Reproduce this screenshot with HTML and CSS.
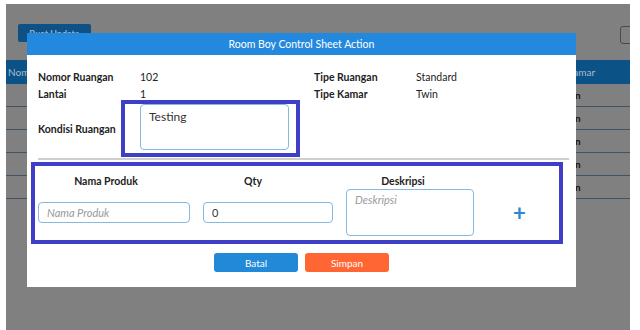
FILE: index.html
```
<!DOCTYPE html>
<html lang="id">
<head>
  <meta charset="UTF-8"/>
  <meta name="viewport" content="width=device-width, initial-scale=1.0"/>
  <title>Room Boy Control Sheet</title>
  <link rel="stylesheet" href="styles.css">
</head>
<body>
  <div class="screen">
    <!-- halaman di belakang modal (sudah diredupkan) -->
    <div class="toolbar">
      <button class="btn-update">Buat Update</button>
      <button class="btn-outline" aria-label="Cari"></button>
    </div>
    <table class="list">
      <thead>
        <tr><th class="c-no">Nomor Ruangan</th><th class="c-mid">Lantai</th><th class="c-kamar">Tipe Kamar</th><th class="c-end"></th></tr>
      </thead>
      <tbody>
        <tr><td class="c-no"></td><td class="c-mid">1</td><td class="c-kamar">Twin</td><td class="c-end"></td></tr>
        <tr><td class="c-no"></td><td class="c-mid">1</td><td class="c-kamar">Twin</td><td class="c-end"></td></tr>
        <tr><td class="c-no"></td><td class="c-mid">1</td><td class="c-kamar">Twin</td><td class="c-end"></td></tr>
        <tr><td class="c-no"></td><td class="c-mid">2</td><td class="c-kamar">Twin</td><td class="c-end"></td></tr>
        <tr><td class="c-no"></td><td class="c-mid">2</td><td class="c-kamar">Twin</td><td class="c-end"></td></tr>
      </tbody>
    </table>

    <!-- MODAL -->
    <div class="modal">
      <div class="modal-header">Room Boy Control Sheet Action</div>
      <div class="modal-body">
        <div class="info">
          <div class="lbl">Nomor Ruangan</div><div class="val">102</div>
          <div class="lbl">Tipe Ruangan</div><div class="val">Standard</div>
          <div class="lbl">Lantai</div><div class="val">1</div>
          <div class="lbl">Tipe Kamar</div><div class="val">Twin</div>
        </div>
        <div class="kondisi">
          <div class="lbl">Kondisi Ruangan</div>
          <div class="mark mark-kondisi">
            <textarea class="area area-kondisi">Testing</textarea>
          </div>
        </div>
        <hr class="sep">
        <div class="mark mark-produk">
          <div class="produk-head">
            <div class="h-nama">Nama Produk</div>
            <div class="h-qty">Qty</div>
            <div class="h-desk">Deskripsi</div>
          </div>
          <div class="produk-row">
            <input class="field f-nama" placeholder="Nama Produk">
            <input class="field f-qty" value="0">
            <textarea class="area f-desk" placeholder="Deskripsi"></textarea>
            <span class="add">+</span>
          </div>
        </div>
        <div class="actions">
          <button class="btn btn-batal">Batal</button>
          <button class="btn btn-simpan">Simpan</button>
        </div>
      </div>
    </div>
  </div>
</body>
</html>
```

FILE: styles.css
```
body {
  margin: 0;
  background: #fff;
  font-family: 'Lato', 'Noto Sans', sans-serif;
  color: #222;
}
.screen {
  position: relative;
  margin: 4px 0 0 6px;
  width: 624px;
  height: 326px;
  background: #808080;
  overflow: hidden;
}
/* halaman belakang */
.toolbar {
  display: flex;
  justify-content: space-between;
  padding: 20px 0 0 12px;
  height: 32px;
  box-sizing: border-box;
}
.btn-update {
  width: 73px;
  height: 18px;
  border: 0;
  border-radius: 2px;
  background: #0d5186;
  color: #9fb0c0;
  font-family: inherit;
  font-size: 9px;
  font-weight: 700;
  padding: 0;
}
.btn-outline {
  margin: 2px -14px 0 0;
  width: 24px;
  height: 18px;
  border: 1px solid #4a4a4a;
  border-radius: 3px;
  background: #808080;
  padding: 0;
}
.list {
  margin-top: 24px;
  width: 624px;
  border-collapse: collapse;
  table-layout: fixed;
  font-size: 10px;
}
.list th {
  height: 24px;
  background: #0b5287;
  color: #a9bccd;
  font-weight: 400;
  text-align: left;
  padding: 0;
}
.list td {
  height: 22px;
  border-bottom: 1px solid #3f5366;
  color: #151515;
  font-weight: 700;
  padding: 0;
}
.list .c-no { width: 80px; padding-left: 2px; }
.list .c-mid { width: 447px; }
.list .c-kamar { width: 70px; text-align: center; }
.list .c-end { width: 25px; }

/* MODAL */
.modal {
  position: absolute;
  left: 21px;
  top: 29px;
  width: 549px;
  height: 254px;
  background: #fff;
}
.modal-header {
  height: 22px;
  line-height: 22px;
  background: #2389de;
  color: #fff;
  text-align: center;
  font-size: 10.5px;
}
.modal-body {
  padding: 14px 0 0 4px;
}
.info {
  display: grid;
  grid-template-columns: 102px 174px 102px 1fr;
  padding-left: 7px;
  line-height: 17px;
  font-size: 10.5px;
}
.lbl {
  font-weight: 700;
}
.kondisi {
  display: flex;
  align-items: center;
  margin-top: -3px;
  padding-left: 7px;
  font-size: 10.5px;
}
.kondisi .lbl {
  width: 83px;
  flex-shrink: 0;
  white-space: nowrap;
}
.mark {
  border: 4px solid #3f3fc6;
}
.mark-kondisi {
  padding: 0 7px 3px 15px;
}
.area {
  display: block;
  box-sizing: border-box;
  border: 1px solid #83b9e2;
  border-radius: 4px;
  resize: none;
  font-family: inherit;
  color: #333;
  outline: none;
}
.area-kondisi {
  width: 149px;
  height: 46px;
  padding: 4px 8px;
  font-size: 12px;
}
.sep {
  margin: 1px 7px 2px 7px;
  border: 0;
  border-top: 2px solid #cfcfcf;
}
.mark-produk {
  width: 521px;
  padding: 0 0 4px 3px;
}
.produk-head {
  display: flex;
  gap: 13px;
  padding-top: 8px;
  line-height: 15px;
  font-size: 10.5px;
  font-weight: 700;
}
.produk-head > div {
  text-align: center;
  box-sizing: border-box;
}
.h-nama { width: 152px; padding-right: 16px; }
.h-qty { width: 130px; padding-right: 30px; }
.h-desk { width: 128px; padding-right: 14px; }
.produk-row {
  display: flex;
  align-items: center;
  gap: 13px;
}
.field {
  box-sizing: border-box;
  height: 21px;
  border: 1px solid #83b9e2;
  border-radius: 4px;
  padding: 0 8px;
  font-family: inherit;
  font-size: 11px;
  color: #333;
  outline: none;
}
.field::placeholder, .area::placeholder {
  color: #9a9a9a;
  font-style: italic;
}
.f-nama { width: 152px; }
.f-qty { width: 130px; }
.f-desk {
  width: 128px;
  height: 47px;
  padding: 3px 8px;
  font-size: 11px;
}
.add {
  margin-left: 26px;
  color: #2a86d3;
  font-size: 22px;
  font-weight: 700;
  line-height: 1;
}
.actions {
  display: flex;
  justify-content: center;
  gap: 7px;
  margin-top: 9px;
  padding-right: 4px;
}
.btn {
  width: 84px;
  height: 19px;
  border: 0;
  border-radius: 3px;
  color: #fff;
  font-family: inherit;
  font-size: 10px;
  padding: 0;
}
.btn-batal { background: #2288d8; }
.btn-simpan { background: #ff6633; }
```
